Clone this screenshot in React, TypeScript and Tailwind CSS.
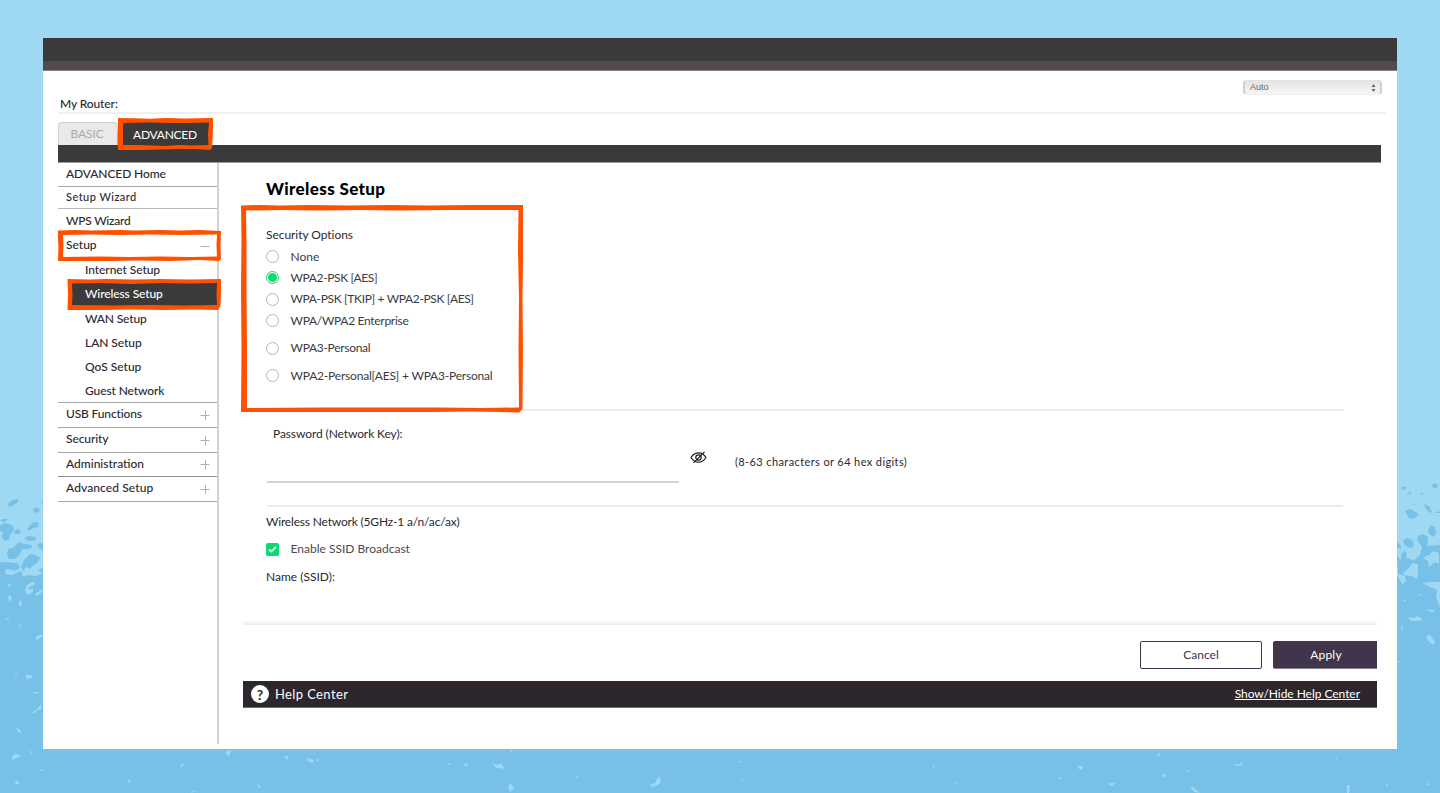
import { useState } from "react";

type NavItem = {
  label: string;
  row: string;
  text: string;
  sign?: "plus" | "minus";
};

const topItems: NavItem[] = [
  { label: "ADVANCED Home", row: "h-6 border-b border-[#a9a9a9] pb-0.5", text: "text-[12px] tracking-[-0.1px]" },
  { label: "Setup Wizard", row: "h-[22px] border-b border-[#b9b9b9]", text: "text-[11px] tracking-[0.45px]" },
  { label: "WPS Wizard", row: "h-[23px]", text: "text-[12px] tracking-[-0.25px]" },
  { label: "Setup", row: "h-[26px]", text: "text-[12px]", sign: "minus" },
];

const setupItems = [
  { label: "Internet Setup", row: "h-[23px] tracking-[-0.07px]" },
  { label: "Wireless Setup", row: "h-[25px] tracking-[-0.1px]" },
  { label: "WAN Setup", row: "h-[25px] tracking-[-0.15px]" },
  { label: "LAN Setup", row: "h-6 tracking-[-0.05px]" },
  { label: "QoS Setup", row: "h-6" },
  { label: "Guest Network", row: "h-[23px] pt-px tracking-[-0.1px]" },
];

const bottomItems: NavItem[] = [
  {
    label: "USB Functions",
    row: "h-[25px] border-b border-[#a9a9a9] pb-0.5",
    text: "text-[12px] tracking-[-0.15px]",
    sign: "plus",
  },
  {
    label: "Security",
    row: "h-[25px] border-b border-[#a9a9a9] pb-0.5",
    text: "text-[12px] tracking-[-0.1px]",
    sign: "plus",
  },
  { label: "Administration", row: "h-6 border-b border-[#8f8f8f] pb-0.5", text: "text-[12px]", sign: "plus" },
  {
    label: "Advanced Setup",
    row: "h-[25px] border-b border-[#a9a9a9] pb-0.5",
    text: "text-[12px] tracking-[0.1px]",
    sign: "plus",
  },
];

const securityOptions = [
  { label: "None", row: "h-[21px]", text: "" },
  { label: "WPA2-PSK [AES]", row: "h-[21px]", text: "tracking-[-0.37px]" },
  { label: "WPA-PSK [TKIP] + WPA2-PSK [AES]", row: "h-[22px]", text: "tracking-[-0.35px]" },
  { label: "WPA/WPA2 Enterprise", row: "h-[21px]", text: "tracking-[-0.3px]" },
  { label: "WPA3-Personal", row: "h-[34px]", text: "tracking-[-0.3px]" },
  { label: "WPA2-Personal[AES] + WPA3-Personal", row: "h-[21px]", text: "tracking-[-0.2px]" },
];

function Sign({ kind }: { kind: "plus" | "minus" }) {
  return (
    <svg width="10" height="10" viewBox="0 0 10 10" className="mt-px" stroke="#b0b0b0" strokeWidth="1">
      <path d="M0.5 5.5H9.5" />
      {kind === "plus" && <path d="M5.5 1V10" />}
    </svg>
  );
}

function Background() {
  return (
    <svg className="absolute inset-0" width="1440" height="793" viewBox="0 0 1440 793">
      <rect width="1440" height="793" fill="#9fd8f2" />
      <g fill="#77c0e8">
        <path d="M0 563L3 562L6 563L5 574L12 575L21 571L23 577L28 575L36 576L43 573V620H720V575H1397L1402 584L1406 582L1405 576L1398 574L1397 555L1401 561L1401 554L1404 551L1407 553L1406 558L1414 560L1420 555L1422 547L1417 540L1418 536L1423 534L1428 537L1427 546L1440 545V793H0Z" />
        <path d="M7 505L12 500L19 499L17 503L10 507Z" />
        <path d="M0 521L3 519L8 519L5 522Z" />
        <path d="M0 525L5 523L12 525L14 530L10 535L9 540L4 541L2 537L3 532L0 531Z" />
        <path d="M14 532L17 529L21 531L19 534L15 534Z" />
        <path d="M33 509L37 507L40 510L38 513L34 512Z" />
        <path d="M27 530L30 525L34 522L39 523L38 527L34 528L30 530Z" />
        <path d="M24 539L28 536L35 537L36 540L30 541Z" />
        <path d="M7 555L8 549L13 548L19 542L24 544L31 545L32 548L27 549L22 549L20 554L15 559L9 559Z" />
        <path d="M21 566L25 559L30 554L36 555L40 558L37 563L32 566L30 569L26 567L23 571Z" />
        <path d="M0 564L7 562L17 563L20 567L16 571L8 569L1 570Z" />
        <path d="M37 544L43 543V551L39 548Z" />
        <path d="M41 503L43 501V504Z" />
        <path d="M38 570L43 568V573Z" />
        <path d="M1401 488L1405 486L1407 488L1403 490Z" />
        <path d="M1407 493L1411 492L1411 495L1408 494Z" />
        <path d="M1419 493L1423 493L1423 495Z" />
        <path d="M1432 485L1435 483L1438 485L1437 488L1433 488Z" />
        <path d="M1424 504L1429 506L1432 512L1430 513L1426 509Z" />
        <path d="M1405 511L1410 509L1419 514L1417 516L1414 519L1409 518Z" />
        <path d="M1403 540L1407 538L1412 540L1414 545L1412 548L1407 547L1404 544Z" />
        <path d="M1428 530L1431 525L1435 527L1436 534L1433 537L1429 534Z" />
        <path d="M1397 542L1401 546L1401 549L1397 547Z" />
        <path d="M1412 504L1415 504L1414 505Z" />
        <path d="M1434 513L1440 511V513Z" />
      </g>
      <g fill="#9fd8f2">
        <path d="M25 590L27 585L32 582L35 582L34 585L29 587L29 590L33 588L33 592L29 594L26 594Z" />
        <path d="M8 585L11 583L9 588Z" />
        <path d="M7 597L10 595L12 598L10 602Z" />
        <path d="M19 600L22 602L21 607L19 605Z" />
        <path d="M35 594L43 589V591L37 596Z" />
        <path d="M5 621L8 617L9 619Z" />
        <path d="M18 624L21 625L20 628Z" />
        <path d="M35 638L39 635L43 635V636L37 640Z" />
        <path d="M26 675L32 675L32 678L26 679Z" />
        <path d="M31 692L38 692L38 694Z" />
        <path d="M32 713L37 709L41 704L41 709L37 710L34 714Z" />
        <path d="M15 674L17 673L16 677Z" />
        <path d="M16 727L19 729L22 733L18 732Z" />
        <path d="M12 757L16 753L21 757L18 757L12 760Z" />
        <path d="M16 780L20 784L15 784Z" />
        <path d="M29 750L32 752L32 754Z" />
        <path d="M38 768L43 770V772Z" />
        <path d="M180 768L182 763L184 765Z" />
        <path d="M225 752L231 750L229 757Z" />
        <path d="M127 783L130 778L130 782Z" />
        <path d="M191 793L194 790L196 791Z" />
        <path d="M284 756L289 756L287 760Z" />
        <path d="M307 758L314 760L312 763L308 761Z" />
        <path d="M316 760L319 758L318 762Z" />
        <path d="M257 784L261 787L259 788Z" />
        <path d="M447 763L451 763L450 765Z M463 764L468 763L467 767Z" />
        <path d="M492 762L497 765L501 763L505 769L499 768L496 768Z" />
        <path d="M511 783L514 789L510 792L508 787Z" />
        <path d="M510 750L513 750L511 753Z" />
        <path d="M659 776L661 782L658 785L652 787L650 785L655 783Z" />
        <path d="M574 778L579 775L577 778Z" />
        <path d="M739 761L742 761L740 763Z" />
        <path d="M741 780L743 779L743 782Z" />
        <path d="M932 765L935 766L934 768Z M940 766L941 766L941 768Z" />
        <path d="M1078 766L1083 766L1082 770L1078 768Z" />
        <path d="M1108 784L1116 782L1112 786Z" />
        <path d="M953 784L958 781L957 783Z" />
        <path d="M1058 778L1061 777L1061 780Z" />
        <path d="M1157 754L1160 753L1159 757Z" />
        <path d="M1234 763L1238 765L1243 762L1241 766L1236 766Z" />
        <path d="M1162 774L1167 775L1164 778Z" />
        <path d="M1190 786L1194 788L1200 793L1194 792Z" />
        <path d="M1185 770L1191 771L1188 772Z" />
        <path d="M1347 785L1350 785L1349 793H1347Z" />
        <path d="M1336 758L1337 758L1337 761Z M1386 784L1388 784L1387 787Z" />
        <path d="M1426 784L1429 783L1428 786Z" />
        <path d="M1403 573L1409 568L1412 563L1418 564L1418 572L1417 579L1411 576L1404 575Z" />
        <path d="M1423 558L1430 554L1433 551L1439 553V564L1435 562L1429 567L1428 561Z" />
        <path d="M1422 583L1430 582L1440 582V607L1436 597L1437 590L1430 587Z" />
        <path d="M1407 617L1413 618L1418 616L1423 620L1416 621L1411 621Z" />
        <path d="M1402 624L1403 630L1401 631Z" />
        <path d="M1426 636L1430 635L1435 642L1433 645L1428 641Z" />
        <path d="M1419 594L1422 594L1421 596Z M1403 600L1406 600L1405 602Z" />
        <path d="M1427 609L1433 610L1435 612L1430 612Z" />
        <path d="M1397 661L1400 661L1398 663Z" />
      </g>
    </svg>
  );
}

// Hand-drawn marker frames around the steps to follow
function Markers() {
  return (
    <svg
      className="pointer-events-none absolute inset-0"
      width="1440"
      height="793"
      viewBox="0 0 1440 793"
      fill="#ff5000"
      fillRule="evenodd"
    >
      <path d="M118 118L135 118.3L150 118.7L166 118L185 118.5L213 118L213 128L212.500 140L212 148L210 150L196 149L178 149L160 149.500L140 150L118 150L117.500 138L118 128Z M123 123L150 122.500L170 123L190 123L209 122.500L208 134L208.500 145L190 145.500L180 145L165 146L140 145L123 145Z" />
      <path d="M58 230.500L75 230L92 230.500L120 230L135 230.500L160 230L180 230.500L200 230L221 231L220.500 245L221 259L219 261L200 260L170 261L140 260.500L110 261L80 261L58 261L58.500 248L58 238Z M63 235L90 234.500L120 235L150 234.500L180 235L217 234.500L216.500 245L217 256.500L190 257L160 256.500L130 257L100 256.500L63 257L63.500 245Z" />
      <path d="M67.500 279L90 279.500L105 279L135 279.500L160 279L190 279.500L221 279L221 292L220.500 306L218 310L195 309.500L165 310L130 309.500L100 310L67.500 310L68 294Z M72 283.500L100 283L130 284L160 283L190 283.500L217 283L216.500 294L217 305L185 305.500L150 305L115 305.500L72 305L72.500 295Z" />
      <path d="M241 205.500L260 205L280 205.500L310 205L350 205.500L390 205L430 205.500L470 205L523 205L523 260L522.500 300L523 350L522.500 409L519 412.500L500 412L470 411.500L430 412L380 412L330 412L280 412L241 412L241.500 350L241 290L241.500 240Z M246 210.500L280 210L320 210.500L360 210L400 210.500L450 210L518.500 210L518 250L519 300L518.500 350L519 407.500L480 408L440 407.500L380 407.500L320 407.500L247 408L247 350L246.500 290L246.500 240Z" />
    </svg>
  );
}

export default function App() {
  const [security, setSecurity] = useState("WPA2-PSK [AES]");
  const [broadcast, setBroadcast] = useState(true);

  return (
    <div className="relative h-[793px] w-[1440px] overflow-hidden font-['Lato','Open_Sans',sans-serif] text-[12px] text-[#2b2830]">
      <Background />
      <div className="relative mx-[43px] pt-[38px]">
        <div className="h-[711px] bg-white">
          <div className="h-[23px] bg-[#3a3a3a]" />
          <div className="h-[10px] border-b border-[#858285] bg-[#514b51]" />

          <header className="ml-[15px] mr-[11px] flex h-[43px] justify-between border-b-2 border-[#f0f0f0]">
            <div className="self-end pl-0.5 text-[12px] font-medium leading-4 tracking-[-0.1px]">My Router:</div>
            <button className="mr-1 mt-[9px] flex h-[15px] w-[139px] items-center justify-between rounded-[4px] border-x-2 border-b border-x-[#cfcfcf] border-b-[#f0f0f0] bg-gradient-to-b from-[#e3e3e3] to-[#f6f6f6] pl-[5px] pr-1 pt-px font-['Liberation_Sans',sans-serif] text-[9px] text-[#6e6462]">
              Auto
              <svg width="5" height="8" viewBox="0 0 5 8" fill="#6e6462">
                <path d="M2.5 0L4.500 3H0.500Z M2.500 8L4.500 5H0.500Z" />
              </svg>
            </button>
          </header>

          <nav className="ml-[15px] flex h-[31px] items-end">
            <button className="h-[23px] w-[60px] rounded-t-[4px] border border-b-0 border-[#cfcfcf] bg-[#e9e9e9] pr-0.5 text-[12px] tracking-[-0.1px] text-[#a9a9a9]">
              BASIC
            </button>
            <button className="ml-[3px] h-[23px] w-[90px] bg-[#3a3a3a] pr-0.5 pt-0.5 text-[12px] tracking-[-0.25px] text-white">
              ADVANCED
            </button>
          </nav>
          <div className="ml-[15px] mr-4 h-[18px] border-b border-[#9a9a9a] bg-[#3a3a3a]" />

          <div className="flex">
            <aside className="ml-[15px] h-[581px] w-[161px] border-r-2 border-[#d2d2d2] font-medium">
              {topItems.map((item) => (
                <div key={item.label} className={`flex items-center justify-between pl-2 pr-[7px] ${item.row}`}>
                  <span className={item.text}>{item.label}</span>
                  {item.sign && <Sign kind={item.sign} />}
                </div>
              ))}
              <div className="border-b border-[#a9a9a9]">
                {setupItems.map((item) => (
                  <div
                    key={item.label}
                    className={`flex items-center ${item.row} ${
                      item.label === "Wireless Setup" ? "ml-[13px] bg-[#3a3a3a] pl-[14px] text-white" : "pl-[27px]"
                    }`}
                  >
                    {item.label}
                  </div>
                ))}
              </div>
              {bottomItems.map((item) => (
                <div key={item.label} className={`flex items-center justify-between pl-2 pr-[7px] ${item.row}`}>
                  <span className={item.text}>{item.label}</span>
                  {item.sign && <Sign kind={item.sign} />}
                </div>
              ))}
            </aside>

            <main className="ml-6 w-[1134px]">
              <h1 className="h-[62px] pl-[23px] pt-[14px] text-[17px] font-black leading-6 tracking-[0.37px] text-black">
                Wireless Setup
              </h1>

              <section className="mr-[33px] h-[186px] border-b-2 border-[#e9eceb] pl-[23px]">
                <h2 className="h-[21px] leading-5 tracking-[-0.05px]">Security Options</h2>
                {securityOptions.map((option) => (
                  <label key={option.label} className={`flex items-center ${option.row}`}>
                    <input
                      type="radio"
                      name="security"
                      className="peer sr-only"
                      checked={security === option.label}
                      onChange={() => setSecurity(option.label)}
                    />
                    <span className="flex size-[13px] items-center justify-center rounded-full border border-[#b4b4b4] peer-checked:border-[#0bdc71]">
                      {security === option.label && <span className="size-[9px] rounded-full bg-[#0bdc71]" />}
                    </span>
                    <span className={`ml-[11.5px] text-[#3c3a3e] ${option.text}`}>{option.label}</span>
                  </label>
                ))}
              </section>

              <section className="ml-6 mr-[34px] flex h-24 border-b-2 border-[#e9eceb]">
                <label className="h-[72px] w-[412px] border-b-2 border-[#d2d2d2] pl-[6px] pt-[15px] leading-4 tracking-[-0.1px]">
                  Password (Network Key):
                  <input type="text" className="block h-7 w-full outline-none" />
                </label>
                <svg
                  className="ml-[11px] mt-[40px]"
                  width="17"
                  height="13"
                  viewBox="0 0 17 13"
                  fill="none"
                  stroke="#1d1b1e"
                  strokeWidth="1.2"
                >
                  <path d="M1 6.500C3 3.300 5.500 1.800 8.500 1.800S14 3.300 16 6.500C14 9.700 11.500 11.200 8.500 11.200S3 9.700 1 6.500Z" />
                  <circle cx="8.500" cy="6.500" r="2.700" />
                  <path d="M3.500 11.800L14.500 0.800" />
                </svg>
                <span className="ml-7 mt-[43px] text-[11px] leading-4 tracking-[0.39px]">
                  (8-63 characters or 64 hex digits)
                </span>
              </section>

              <section className="h-[113px] pl-[23px]">
                <h2 className="h-[30px] pt-[7px] leading-4 tracking-[-0.18px]">Wireless Network (5GHz-1 a/n/ac/ax)</h2>
                <label className="flex h-6 items-center">
                  <input
                    type="checkbox"
                    className="sr-only"
                    checked={broadcast}
                    onChange={() => setBroadcast(!broadcast)}
                  />
                  <span className="flex size-[13px] items-center justify-center rounded-[2px] bg-[#0bdc71]">
                    {broadcast && (
                      <svg width="9" height="7" viewBox="0 0 9 7" fill="none" stroke="#fff" strokeWidth="1.800">
                        <path d="M1 3.500L3.300 5.600L8 1" />
                      </svg>
                    )}
                  </span>
                  <span className="ml-[11.5px] text-[#4c494e]">Enable SSID Broadcast</span>
                </label>
                <div className="pt-[8px] leading-4">Name (SSID):</div>
              </section>
              <div className="h-[5px] bg-gradient-to-b from-white to-[#ededed]" />

              <div className="mb-3 mt-4 flex justify-end gap-[11px]">
                <button className="h-7 w-[122px] rounded-[2px] border border-[#40354a] text-[#40354a]">Cancel</button>
                <button className="h-7 w-[104px] rounded-l-[2px] border-b border-[#857d8b] bg-[#40354a] pl-0.5 tracking-[0.2px] text-white">
                  Apply
                </button>
              </div>

              <footer className="flex h-[27px] items-center justify-between border-b border-[#716d72] bg-[#2d272d] pl-2 pr-[17px] text-white">
                <div className="flex items-center gap-[6px] text-[13px] tracking-[0.38px]">
                  <span className="flex size-[18px] items-center justify-center rounded-full bg-white pt-px text-[14px] font-bold tracking-normal text-[#2d272d]">
                    ?
                  </span>
                  <span className="pt-0.5">Help Center</span>
                </div>
                <button className="text-[12px] tracking-[-0.04px] underline">Show/Hide Help Center</button>
              </footer>
            </main>
          </div>
        </div>
      </div>
      <Markers />
    </div>
  );
}
